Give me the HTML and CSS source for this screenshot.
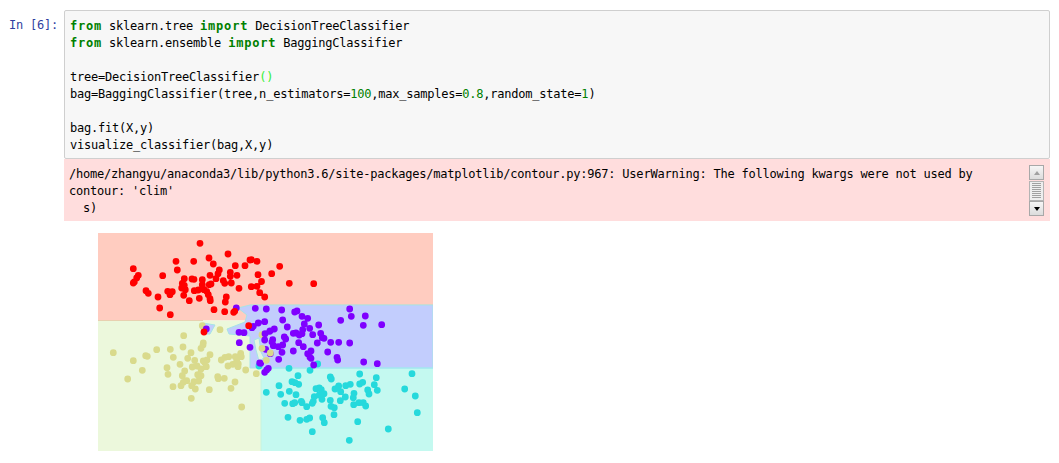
FILE: index.html
```html
<!DOCTYPE html>
<html>
  <head>
    <meta charset="utf-8">
    <title>Bagging classifier notebook</title>
    <link rel="stylesheet" href="styles.css">
  </head>
  <body>
    <main class="cell">
      <div class="prompt">In [6]:</div>
      <div class="cell_body">
        <pre class="input"><span class="kw">from</span> sklearn.tree <span class="kw">import</span> DecisionTreeClassifier
<span class="kw">from</span> sklearn.ensemble <span class="kw">import</span> BaggingClassifier

tree=DecisionTreeClassifier<span class="paren">()</span>
bag=BaggingClassifier(tree,n_estimators=<span class="num">100</span>,max_samples=<span class="num">0.8</span>,random_state=<span class="num">1</span>)

bag.fit(X,y)
visualize_classifier(bag,X,y)</pre>
        <div class="stderr">
          <pre class="stderr_text">/home/zhangyu/anaconda3/lib/python3.6/site-packages/matplotlib/contour.py:967: UserWarning: The following kwargs were not used by
contour: 'clim'
  s)</pre>
          <div class="scrollbar">
            <div class="sb_button"><span class="arrow_up"></span></div>
            <div class="sb_thumb"></div>
            <div class="sb_button"><span class="arrow_down"></span></div>
          </div>
        </div>
        <div class="plot">
          <!-- viewBox uses page coordinates, easier to read points off the screenshot -->
          <svg width="335" height="218" viewBox="98 233 335 218">
            <rect class="r_red" x="98" y="233" width="335" height="87.5"/>
            <rect class="r_olive" x="98" y="320.5" width="163" height="131"/>
            <rect class="r_cyan" x="261" y="368" width="172" height="83"/>
            <path class="edge_top" d="M98 320.5H203M250 305H433"/>
            <path class="r_blue" d="M238 308L250 305H433V368H250V336L229 334L227 329L245 322L247 315Z"/>
            <path class="r_blue" d="M203 323L215 325L210 334L205 334L201 329Z"/>
            <path class="r_patch" d="M254 340L259 338L261 352L264 358L259 361L256 350Z"/>
            <path class="edge_cyan" d="M261 368H433"/>
            <path class="edge_side" d="M261 372V451"/>

            <path class="dots d_olive" d="M113.3 352.7h0M133.3 360.7h0M145.7 355.7h0M147.3 356.3h0M156.7 349.7h0M170.3 349.3h0M183 347h0M201 348.3h0M203 345h0M191 352.7h0M210 354.7h0M173.3 357.3h0M187.7 358.3h0M194.7 360.3h0M203.3 361h0M207 360h0M205 362.7h0M180 364.3h0M142.3 370.3h0M167 367.7h0M168 374.3h0M127.7 379h0M184.7 371h0M182.3 375.7h0M192.3 367h0M197 366h0M201 369h0M206.3 366.7h0M197.7 374.7h0M201 375.7h0M221.3 360h0M225 357.3h0M228.7 356.7h0M235.3 356.7h0M240.7 353.3h0M241.3 356.7h0M228 366h0M232.7 364.3h0M236.7 360.7h0M238 366.7h0M238.3 364h0M245.7 370h0M256.3 373.7h0M217.7 376.7h0M218.3 378.7h0M224.3 378.3h0M235 382h0M231 388.3h0M194 381.7h0M198.7 381h0M186.7 380.7h0M183.3 382.3h0M181 385.7h0M173 386.7h0M191.7 385.7h0M195.3 389h0M209.3 389.7h0M191.3 398.3h0M241.7 407h0M202.3 325.7h0M220 329.7h0M183.7 335.7h0M262 334.7h0M203.3 343h0"/>
            <path class="dots d_cyan" d="M289 368.3h0M310 370.3h0M317.7 364h0M298 375.7h0M359.7 374h0M376.3 377.7h0M412 373.7h0M330.3 377h0M331.3 379h0M279 385.7h0M292 381.7h0M295 382.7h0M298.7 384.3h0M359.7 384h0M362.7 382.3h0M374.3 384.7h0M338.7 386h0M345.7 385.7h0M350.3 384.3h0M335 389h0M316 388.7h0M319.3 388h0M321.3 389.7h0M367.7 390h0M369 394h0M377.3 390.3h0M404.7 389h0M415.3 396h0M266.3 392.3h0M289.3 391.3h0M280.7 394.3h0M296 394.7h0M340.7 391.7h0M324 393.7h0M319.3 395h0M314.3 396.7h0M345.3 397h0M353.3 397.7h0M354 393.3h0M322 399.3h0M330.3 400.3h0M340.3 400.7h0M301.3 401.3h0M302 402.7h0M313.3 401.3h0M312.3 403.3h0M284.7 403.3h0M292.7 403.7h0M294.7 402.7h0M306.7 406.7h0M331 406.3h0M334.3 407.7h0M353.7 404.7h0M359 402.7h0M363.3 402.7h0M365.7 406h0M417.3 412.7h0M334 414.7h0M288 417.3h0M300 420.3h0M306.7 419.3h0M309.7 418h0M322.7 417.7h0M324.3 422.7h0M357.7 421.7h0M388.3 429h0M312.3 431.7h0M349.3 440.3h0M259 366h0"/>
            <path class="dots d_purple" d="M236.3 308h0M255.3 308.3h0M266.3 309h0M264.7 321.7h0M258.3 323h0M253.3 326.3h0M252 327.7h0M206.3 329h0M239 332.3h0M244 332.7h0M265 333.7h0M270 331h0M239.3 342.7h0M281.7 310h0M294.7 312h0M297 311h0M302 316.3h0M307.7 318.3h0M282.7 320h0M349.7 309h0M351.3 316.3h0M365.3 316h0M340.7 320.3h0M363.3 325.3h0M381.7 324.7h0M318.7 325h0M304.3 324h0M287.3 327h0M309.7 328.3h0M302.7 329.7h0M274.3 329h0M269.7 331.3h0M293.3 333.3h0M296 333h0M299.3 335h0M302 333.7h0M312.7 334.7h0M320.7 333.3h0M322.3 337.7h0M324 338.3h0M284.3 337h0M285.7 339h0M272.7 339.7h0M272 342h0M298.7 342.7h0M317.3 343h0M330.7 342.3h0M338.7 342.3h0M349.7 343h0M264.7 340h0M272.3 341.7h0M273.3 345.7h0M278.3 346.7h0M282.7 345h0M303.3 346.7h0M265.7 349.3h0M270.3 353.7h0M282 352.3h0M293.3 351h0M311 351h0M307.7 353.7h0M310 357.3h0M311 358.3h0M327.7 352h0M337 357.3h0M337.7 360h0M278.7 359.3h0M313.7 365h0M363.7 362h0M377.3 363.7h0M268.3 368.3h0M266.7 370h0M264.7 372.3h0M260.7 363.3h0M250 347.3h0M259.7 363h0"/>
            <path class="dots d_olive" d="M262 348.3h0M270.3 353h0M266.3 360.3h0"/>
            <path class="dots d_red" d="M200 243.3h0M228 254h0M176 261.3h0M193.7 261.3h0M209 258h0M213.3 264h0M235.3 265.7h0M245 265.7h0M250 260h0M251.3 259.7h0M257 261.3h0M133.3 268.7h0M177.3 270h0M219.3 270h0M218 273.7h0M230.3 272.3h0M230.3 276.3h0M237 275.3h0M258 274.7h0M271.7 273.7h0M138.3 275.3h0M136.7 278h0M134.3 282h0M133.3 283h0M162.7 275.7h0M210 275.3h0M184.3 278.7h0M192 279h0M194 279.3h0M202.3 279.7h0M216 278.7h0M223.3 280.7h0M224.7 283.3h0M231.3 283h0M261.5 281.5h0M182.3 283.3h0M181.7 288h0M184.3 285.3h0M185.3 289.7h0M202.3 284.7h0M204 289.7h0M206.7 291.3h0M209.3 284.7h0M211 284h0M194.3 290.7h0M198.3 290h0M239 288.3h0M251.3 286.7h0M257 286.3h0M146 290.7h0M148.3 293.3h0M167.7 291.3h0M172.3 291.7h0M170 294.7h0M158 297h0M183.7 295.3h0M189.3 300.7h0M199.3 298.3h0M208.3 294.7h0M210 298.7h0M210.3 300.7h0M226.3 297h0M225.3 302h0M259.7 292.7h0M264.7 297h0M159.7 308h0M214 309.7h0M224.7 311.7h0M233.7 312.3h0M234.7 311.3h0M170.3 314.7h0M248.7 325.7h0M204 332h0M279.7 266.3h0M289.3 283.3h0M313.7 283.7h0"/>
          </svg>
        </div>
      </div>
    </main>
  </body>
</html>
```

FILE: styles.css
```css
body {
  margin: 0;
  background: white;
  font-family: "DejaVu Sans Mono", monospace;
  font-size: 12px;
  letter-spacing: -0.22px;
}

pre {
  margin: 0;
  font-family: inherit;
  font-size: inherit;
  line-height: 17px;
}

.cell {
  display: flex;
  padding: 10px 9px 0 0;
}

.prompt {
  width: 58px;
  flex: none;
  padding: 7px 6px 0 0;
  box-sizing: content-box;
  text-align: right;
  line-height: 17px;
  color: #303f9f;
}

.cell_body {
  flex: 1;
  min-width: 0;
}

.input {
  height: 135px;
  padding: 7px 5px 5px;
  background: #f7f7f7;
  border: 1px solid #cfcfcf;
  border-radius: 2px;
  color: #000;
}

/* bold runs wider than the regular face in the original, 8px a letter */
.kw {
  color: #008000;
  font-weight: bold;
  letter-spacing: 0.78px;
}

.num {
  color: #008000;
}

.paren {
  color: #33ee33;
}

.stderr {
  display: flex;
  justify-content: space-between;
  height: 62px;
  padding: 6px 6px 0 5px;
  box-sizing: border-box;
  background: #ffdddd;
  color: #000;
}

.stderr_text {
  margin-top: 1px;
}

.scrollbar {
  width: 15px;
  height: 51px;
  flex: none;
  display: flex;
  flex-direction: column;
  justify-content: space-between;
}

.sb_button {
  height: 15px;
  box-sizing: border-box;
  border: 1px solid #a8a8a8;
  background: linear-gradient(#f6f6f6, #dcdcdc);
  display: flex;
  align-items: center;
  justify-content: center;
}

.sb_thumb {
  height: 20px;
  box-sizing: border-box;
  border: 1px solid #b4b4b4;
  background: repeating-linear-gradient(#a0a0a0 0 1px, #eeeeee 1px 2px);
  background-size: 9px 15px;
  background-position: center;
  background-repeat: no-repeat;
  background-color: #eeeeee;
}

.arrow_up {
  border: 3px solid transparent;
  border-top: 0;
  border-bottom: 4px solid #a0a0a0;
}

.arrow_down {
  border: 3px solid transparent;
  border-bottom: 0;
  border-top: 4px solid #000;
}

.plot {
  padding: 12px 0 0 34px;
}

.plot svg {
  display: block;
}

.r_red { fill: #ffccc0; }
.r_olive { fill: #ecf8dc; }
.r_cyan { fill: #c4f9f0; }
.r_blue { fill: #c2cdfd; stroke: #a6e4e6; stroke-width: 1; }
.r_patch { fill: #e4f8e0; stroke: #a6e4e6; stroke-width: 1; }

.edge_top { fill: none; stroke: #e8d0b0; stroke-width: 1; }
.edge_cyan { fill: none; stroke: #a0e8f4; stroke-width: 1; }
.edge_side { fill: none; stroke: #c8f4dc; stroke-width: 1; }

.dots {
  fill: none;
  stroke-width: 6.8;
  stroke-linecap: round;
}

.d_red { stroke: #ff0000; }
.d_purple { stroke: #7f00ff; }
.d_cyan { stroke: #26d9dc; }
.d_olive { stroke: #d9da8c; }
```
